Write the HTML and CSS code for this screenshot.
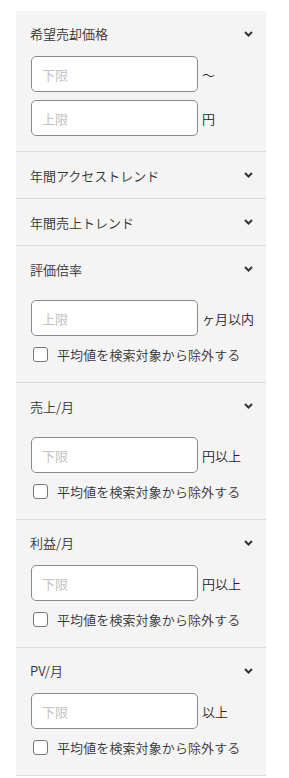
FILE: index.html
```html
<!DOCTYPE html>
<html lang="ja">
<head>
    <meta charset="UTF-8">
    <title>検索条件</title>
    <link rel="stylesheet" href="styles.css">
</head>
<body>
<div class="filter">
    <div class="sec">
        <div class="sec-head top">
            <span>希望売却価格</span>
            <svg class="chev" width="9" height="6" viewBox="0 0 9 6"><path d="M1 1l3.5 3.5L8 1" fill="none" stroke="#333" stroke-width="2"/></svg>
        </div>
        <div class="sec-body first">
            <div class="field"><input type="text" placeholder="下限"><span class="unit">〜</span></div>
            <div class="field gap"><input type="text" placeholder="上限"><span class="unit">円</span></div>
        </div>
    </div>
    <div class="sec">
        <div class="sec-head">
            <span>年間アクセストレンド</span>
            <svg class="chev" width="9" height="6" viewBox="0 0 9 6"><path d="M1 1l3.5 3.5L8 1" fill="none" stroke="#333" stroke-width="2"/></svg>
        </div>
    </div>
    <div class="sec">
        <div class="sec-head">
            <span>年間売上トレンド</span>
            <svg class="chev" width="9" height="6" viewBox="0 0 9 6"><path d="M1 1l3.5 3.5L8 1" fill="none" stroke="#333" stroke-width="2"/></svg>
        </div>
    </div>
    <div class="sec">
        <div class="sec-head">
            <span>評価倍率</span>
            <svg class="chev" width="9" height="6" viewBox="0 0 9 6"><path d="M1 1l3.5 3.5L8 1" fill="none" stroke="#333" stroke-width="2"/></svg>
        </div>
        <div class="sec-body wide">
            <div class="field"><input type="text" placeholder="上限"><span class="unit">ヶ月以内</span></div>
            <label class="check"><input type="checkbox"><span>平均値を検索対象から除外する</span></label>
        </div>
    </div>
    <div class="sec">
        <div class="sec-head">
            <span>売上/月</span>
            <svg class="chev" width="9" height="6" viewBox="0 0 9 6"><path d="M1 1l3.5 3.5L8 1" fill="none" stroke="#333" stroke-width="2"/></svg>
        </div>
        <div class="sec-body wide">
            <div class="field"><input type="text" placeholder="下限"><span class="unit">円以上</span></div>
            <label class="check"><input type="checkbox"><span>平均値を検索対象から除外する</span></label>
        </div>
    </div>
    <div class="sec">
        <div class="sec-head top">
            <span>利益/月</span>
            <svg class="chev" width="9" height="6" viewBox="0 0 9 6"><path d="M1 1l3.5 3.5L8 1" fill="none" stroke="#333" stroke-width="2"/></svg>
        </div>
        <div class="sec-body">
            <div class="field"><input type="text" placeholder="下限"><span class="unit">円以上</span></div>
            <label class="check"><input type="checkbox"><span>平均値を検索対象から除外する</span></label>
        </div>
    </div>
    <div class="sec">
        <div class="sec-head top">
            <span>PV/月</span>
            <svg class="chev" width="9" height="6" viewBox="0 0 9 6"><path d="M1 1l3.5 3.5L8 1" fill="none" stroke="#333" stroke-width="2"/></svg>
        </div>
        <div class="sec-body">
            <div class="field"><input type="text" placeholder="下限"><span class="unit">以上</span></div>
            <label class="check"><input type="checkbox"><span>平均値を検索対象から除外する</span></label>
        </div>
    </div>
</div>
</body>
</html>
```

FILE: styles.css
```css
*{
    margin: 0;
    padding: 0;
    box-sizing: border-box;
}
body{
    background: #fff;
    font-family: "Noto Sans CJK JP", "Noto Sans", sans-serif;
    font-weight: 350;
    color: #333;
    font-size: 13px;
}
.filter{
    width: 250px;
    margin: 11px 0 0 16px;
    background: #f4f4f4;
}
.sec{
    border-bottom: 1px solid #dcdcdc;
}
.sec-head{
    height: 46px;
    padding: 0 13px 0 14px;
    display: flex;
    align-items: center;
    justify-content: space-between;
}
.sec-head.top{
    height: 45px;
}
.sec-head span{
    font-size: 13px;
}
.chev{
    display: block;
}
.sec-body{
    padding: 0 0 18px 15px;
}
.sec-body.first{
    padding-bottom: 15px;
}
.sec-body.wide{
    padding-top: 8px;
}
.field{
    display: flex;
    align-items: center;
}
.field.gap{
    margin-top: 8px;
}
.field input{
    width: 167px;
    height: 36px;
    border: 1px solid #8a8a8a;
    border-radius: 5px;
    background: #fff;
    padding: 0 10px;
    font-family: inherit;
    font-size: 13px;
    color: #333;
    outline: none;
}
.field input::placeholder{
    color: #c2c2c2;
}
.unit{
    margin-left: 4px;
    font-size: 13px;
    color: #222;
}
.check{
    display: flex;
    align-items: center;
    height: 20px;
    margin-top: 8px;
}
.check input{
    appearance: none;
    -webkit-appearance: none;
    width: 15px;
    height: 15px;
    margin-left: 2px;
    border: 1px solid #777;
    border-radius: 3px;
    background: #fff;
}
.check span{
    margin-left: 9px;
    font-size: 13px;
    letter-spacing: 0.1px;
    color: #333;
}
```
